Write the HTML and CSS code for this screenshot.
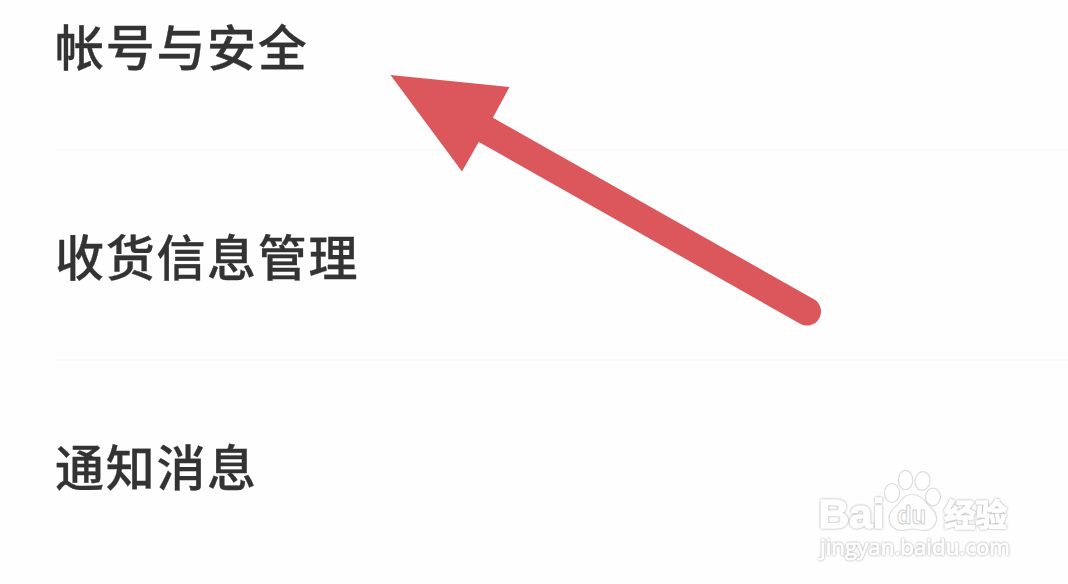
FILE: index.html
```html
<!DOCTYPE html>
<html lang="zh-CN">
<head>
    <meta charset="UTF-8">
    <meta name="viewport" content="width=device-width, initial-scale=1.0">
    <title>设置</title>
    <link rel="stylesheet" href="styles.css">
</head>
<body>

    <div class="settings-list">
        <div class="settings-item first">帐号与安全</div>
        <div class="settings-item">收货信息管理</div>
        <div class="settings-item last">通知消息</div>
    </div>

    <svg class="arrow" width="432" height="252" viewBox="390 75 432 252">
        <polygon points="390.5,75 509.5,87 493,117.5 479,141.5 462,171.5" />
        <line x1="480" y1="126.5" x2="807" y2="311.5" />
    </svg>

    <svg class="watermark" width="210" height="110" viewBox="0 0 210 110">
        <text class="brand" x="8.5" y="68" font-size="41" textLength="66" lengthAdjust="spacingAndGlyphs">Bai</text>
        <ellipse cx="82" cy="33" rx="7.5" ry="9.5" />
        <ellipse cx="95.5" cy="20" rx="7.2" ry="9.7" />
        <ellipse cx="112.5" cy="21" rx="7.5" ry="9.5" transform="rotate(8 112.5 21)" />
        <ellipse cx="123" cy="37" rx="7.5" ry="8.8" />
        <path d="M102 34.5c-7 0-10 4-13 8.5-3 4.5-10 6.5-10 15 0 8 6 12.5 13 12.5 4 0 6-1.5 10.5-1.5s7 1.5 11 1.5c7 0 13-4 13-12 0-7.5-5.5-10-9.5-15-3.5-5-7-9-15-9z" />
        <text class="du" x="87" y="64" font-size="25" textLength="29" lengthAdjust="spacingAndGlyphs">du</text>
        <text class="jingyan" x="134" y="66" font-size="31" textLength="63" lengthAdjust="spacingAndGlyphs">经验</text>
        <text class="site" x="10" y="94.5" font-size="21.5" textLength="190" lengthAdjust="spacingAndGlyphs">jingyan.baidu.com</text>
    </svg>

</body>
</html>
```
FILE: styles.css
```css
body {
    margin: 0;
    height: 584px;
    position: relative;
    overflow: hidden;
    background: #fefefe;
    color: #333;
    font-family: "Noto Sans CJK SC", sans-serif;
}
.settings-list {
    padding-left: 55px;
}
.settings-item {
    box-sizing: border-box;
    height: 210px;
    padding-top: 68px;
    border-bottom: 2px solid #f9f9f9;
    font-size: 49px;
    font-weight: 500;
    line-height: 72px;
    letter-spacing: 1.7px;
    -webkit-text-stroke: 0.3px #333;
}
.settings-item.first {
    height: 151px;
    padding-top: 9px;
    border-bottom-color: #fcfcfc;
}
.settings-item.last {
    border-bottom: none;
}
.arrow {
    position: absolute;
    left: 390px;
    top: 75px;
    fill: #db575c;
}
.arrow line {
    stroke: #db575c;
    stroke-width: 28px;
    stroke-linecap: round;
}
.watermark {
    position: absolute;
    left: 810px;
    top: 460px;
    fill: #fff;
    stroke: #dcdcdc;
    stroke-width: 1.2px;
    font-family: "Liberation Sans", sans-serif;
}
/* thick white letters with a soft grey rim */
.watermark text {
    stroke: #fff;
    stroke-width: 1.5px;
    stroke-linejoin: round;
    filter: drop-shadow(0 0 0.8px #a0a0a0);
}
.brand {
    font-weight: bold;
}
.watermark .du {
    stroke: #cfcfcf;
    stroke-width: 1px;
    filter: none;
    font-weight: bold;
}
.jingyan {
    font-family: "Noto Sans CJK SC", sans-serif;
    font-weight: bold;
}
.watermark .site {
    font-family: "Open Sans", sans-serif;
    stroke-width: 0.8px;
}
```
